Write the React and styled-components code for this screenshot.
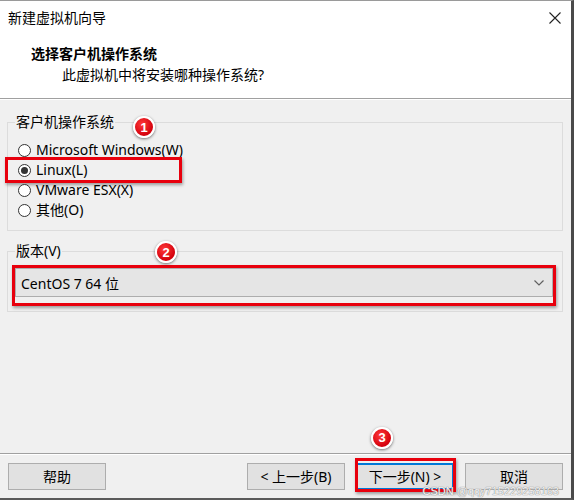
import React from 'react';
import styled, { createGlobalStyle } from 'styled-components';

const GlobalStyle = createGlobalStyle`
  html, body {
    margin: 0;
    padding: 0;
    background: #f0f0f0;
  }
  body {
    font-family: "Noto Sans", "Noto Sans CJK SC", sans-serif;
    font-size: 14px;
    color: #000;
  }
  * {
    box-sizing: border-box;
  }
`;

const Window = styled.div`
  width: 574px;
  height: 500px;
  display: flex;
  flex-direction: column;
  background: #f0f0f0;
  border-top: 1px solid #9a9a9a;
  border-right: 3px solid #4a4a4a;
  border-bottom: 2px solid #5a5a5a;
`;

const TitleBar = styled.div`
  height: 34px;
  display: flex;
  align-items: center;
  justify-content: space-between;
  padding: 0 10px 0 8px;
  background: #fff;
  line-height: 20px;
`;

const Header = styled.div`
  height: 64px;
  background: #fff;
  padding: 9px 0 0 31px;
  border-bottom: 1px solid #a0a0a0;
`;

const Heading = styled.div`
  font-weight: bold;
  font-size: 14px;
  line-height: 20px;
`;

const SubHeading = styled.div`
  margin-top: 1px;
  padding-left: 31px;
  line-height: 20px;
`;

const Body = styled.div`
  flex: 1;
  display: flex;
  flex-direction: column;
  padding: 0 8px 0 7px;
  box-shadow: inset 0 1px #fff;
`;

const GroupBox = styled.fieldset`
  position: relative;
  margin: ${p => p.$top}px 0 0;
  min-width: 0;
  border: 1px solid #dcdcdc;
  padding: ${p => p.$pad};
`;

const Legend = styled.legend`
  padding: 0 1px;
  margin-left: -1px;
  line-height: 20px;
`;

const Options = styled.div`
  display: flex;
  flex-direction: column;
`;

const OptionRow = styled.div`
  position: relative;
  height: 20px;
  display: flex;
  align-items: center;
  gap: 5px;
  padding-left: 2px;
  line-height: 20px;
`;

const Radio = styled.span`
  width: 13px;
  height: 13px;
  border-radius: 50%;
  border: 1px solid #333;
  background: #fff;
  display: flex;
  align-items: center;
  justify-content: center;
  flex-shrink: 0;

  &::after {
    content: '';
    width: 7px;
    height: 7px;
    border-radius: 50%;
    background: ${p => (p.$checked ? '#333' : 'transparent')};
  }
`;

const Combo = styled.div`
  position: relative;
  height: 29px;
  margin-left: -1px;
  display: flex;
  align-items: center;
  justify-content: space-between;
  padding: 0 8px 0 5px;
  background: #e5e5e5;
  border: 1px solid #adadad;
`;

const Highlight = styled.span`
  position: absolute;
  inset: ${p => p.$inset};
  border: 3px solid #e8000d;
  box-shadow: 1px 2px 3px rgba(0, 0, 0, 0.35);
  pointer-events: none;
`;

const Badge = styled.span`
  position: absolute;
  left: ${p => p.$x}px;
  top: ${p => p.$y}px;
  width: 22px;
  height: 22px;
  border-radius: 50%;
  background: radial-gradient(circle at 40% 35%, #ff3a3a, #d4000c 70%);
  border: 2px solid #fff;
  box-shadow: 0 1px 3px rgba(0, 0, 0, 0.55);
  color: #fff;
  font-family: "Liberation Sans", sans-serif;
  font-weight: bold;
  font-size: 13px;
  display: flex;
  align-items: center;
  justify-content: center;
  z-index: 2;
`;

const Footer = styled.div`
  position: relative;
  height: 45px;
  display: flex;
  align-items: flex-start;
  gap: 11px;
  padding: 9px 8px 0 8px;
  border-top: 1px solid #a0a0a0;
  box-shadow: inset 0 1px #fff;
`;

const Spacer = styled.div`
  flex: 1;
`;

const Button = styled.button`
  position: relative;
  width: 98px;
  height: 27px;
  padding: 0;
  background: #e1e1e1;
  border: ${p => (p.$primary ? '2px solid #0078d7' : '1px solid #adadad')};
  font-family: inherit;
  font-size: 14px;
  color: #000;
  line-height: 20px;
`;

const Watermark = styled.span`
  position: absolute;
  right: 12px;
  bottom: 1px;
  font-family: "Liberation Sans", sans-serif;
  font-size: 11px;
  color: rgba(255, 255, 255, 0.9);
  text-shadow: 0 0 1px #8a8a8a, 0 0 1px #8a8a8a;
  z-index: 3;
`;

const CloseIcon = () => (
  <svg width="12" height="12" viewBox="0 0 12 12">
    <path d="M0.5 0.5 L11.5 11.5 M11.5 0.5 L0.5 11.5" stroke="#222" strokeWidth="1.1" fill="none" />
  </svg>
);

const Chevron = () => (
  <svg width="10" height="6" viewBox="0 0 10 6">
    <polyline points="0.5,0.5 5,5 9.5,0.5" stroke="#606060" strokeWidth="1.2" fill="none" />
  </svg>
);

const systems = [
  { label: 'Microsoft Windows(W)' },
  { label: 'Linux(L)', checked: true },
  { label: 'VMware ESX(X)' },
  { label: '其他(O)' },
];

export default function App() {
  return (
    <>
      <GlobalStyle />
      <Window>
        <TitleBar>
          <span>新建虚拟机向导</span>
          <CloseIcon />
        </TitleBar>
        <Header>
          <Heading>选择客户机操作系统</Heading>
          <SubHeading>此虚拟机中将安装哪种操作系统?</SubHeading>
        </Header>
        <Body>
          <GroupBox $top={13} $pad="8px 9px 10px 8px">
            <Legend>客户机操作系统</Legend>
            <Badge $x={125} $y={-16}>1</Badge>
            <Options>
              {systems.map(s => (
                <OptionRow key={s.label}>
                  <Radio $checked={s.checked} />
                  {s.label}
                  {s.checked && <Highlight $inset="-3px auto -3px -11px" style={{ width: 177 }} />}
                </OptionRow>
              ))}
            </Options>
          </GroupBox>
          <GroupBox $top={10} $pad="7px 9px 14px 8px">
            <Legend>版本(V)</Legend>
            <Badge $x={147} $y={-20}>2</Badge>
            <Combo>
              <span>CentOS 7 64 位</span>
              <Chevron />
              <Highlight $inset="-4px -4px -10px -4px" />
            </Combo>
          </GroupBox>
          <Spacer />
        </Body>
        <Footer>
          <Button>帮助</Button>
          <Spacer />
          <Button>&lt; 上一步(B)</Button>
          <Button $primary>
            下一步(N) &gt;
            <Highlight $inset="-7px -4px -4px -3px" />
            <Badge $x={13} $y={-38}>3</Badge>
          </Button>
          <Button>取消</Button>
          <Watermark>CSDN @qqy715229258163</Watermark>
        </Footer>
      </Window>
    </>
  );
}
